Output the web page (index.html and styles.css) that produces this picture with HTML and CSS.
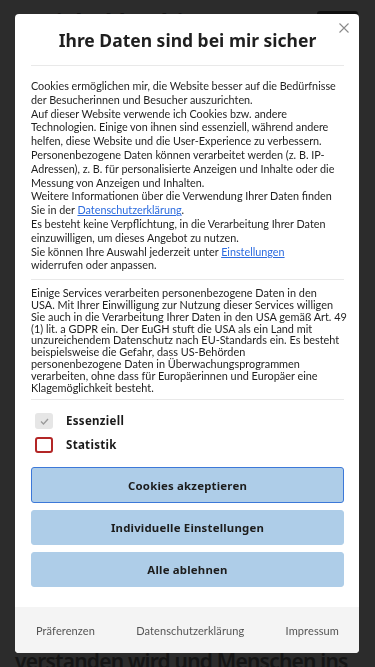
FILE: index.html
```html
<!DOCTYPE html>
<html lang="de">
    <head>
        <meta charset="utf-8">
        <meta name="viewport" content="width=device-width, initial-scale=1">
        <title>Michel Kochin</title>
        <link rel="stylesheet" href="styles.css">
    </head>
    <body>
        <div class="page">
            <div class="page-header">
                <h1 class="page-title">Michel kochin</h1>
                <span class="page-menu"></span>
            </div>
            <div class="page-body">
                <p class="page-lead">verstanden wird und Menschen ins</p>
            </div>
        </div>

        <div class="consent">
            <div class="consent-box">
                <button class="consent-close" aria-label="Schließen">
                    <svg width="10" height="10" viewBox="0 0 10 10"><path d="M0.5 0.5 L9.5 9.5 M9.5 0.5 L0.5 9.5" stroke="#8a8a8a" stroke-width="1.1" fill="none"/></svg>
                </button>
                <div class="consent-inner">
                    <h2 class="consent-title">Ihre Daten sind bei mir sicher</h2>
                    <div class="consent-text consent-text-main">
                        <p>Cookies ermöglichen mir, die Website besser auf die Bedürfnisse der Besucherinnen und Besucher auszurichten.<br>
                        Auf dieser Website verwende ich Cookies bzw. andere Technologien. Einige von ihnen sind essenziell, während andere helfen, diese Website und die User-Experience zu verbessern. Personenbezogene Daten können verarbeitet werden (z. B. IP-Adressen), z. B. für personalisierte Anzeigen und Inhalte oder die Messung von Anzeigen und Inhalten.<br>
                        Weitere Informationen über die Verwendung Ihrer Daten finden Sie in der <a href="#">Datenschutzerklärung</a>.<br>
                        Es besteht keine Verpflichtung, in die Verarbeitung Ihrer Daten einzuwilligen, um dieses Angebot zu nutzen.<br>
                        Sie können Ihre Auswahl jederzeit unter <a href="#">Einstellungen</a> widerrufen&nbsp;oder&nbsp;anpassen.</p>
                    </div>
                    <div class="consent-text consent-text-usa">
                        <p>Einige Services verarbeiten personenbezogene Daten in den<br>
                        USA. Mit Ihrer Einwilligung zur Nutzung dieser Services willigen<br>
                        Sie auch in die Verarbeitung Ihrer Daten in den USA gemäß Art. 49<br>
                        (1) lit. a GDPR ein. Der EuGH stuft die USA als ein Land mit<br>
                        unzureichendem Datenschutz nach EU-Standards ein. Es besteht<br>
                        beispielsweise die Gefahr, dass US-Behörden<br>
                        personenbezogene Daten in Überwachungsprogrammen<br>
                        verarbeiten, ohne dass für Europäerinnen und Europäer eine<br>
                        Klagemöglichkeit besteht.</p>
                    </div>
                    <div class="consent-options">
                        <label class="option">
                            <span class="option-box option-box-locked">
                                <svg width="9" height="7" viewBox="0 0 9 7"><path d="M1 3.5 L3.5 6 L8 1" stroke="#9a9a9a" stroke-width="1.3" fill="none"/></svg>
                            </span>
                            <span class="option-label">Essenziell</span>
                        </label>
                        <label class="option">
                            <span class="option-box option-box-open"></span>
                            <span class="option-label">Statistik</span>
                        </label>
                    </div>
                    <div class="consent-buttons">
                        <button class="btn btn-focus">Cookies akzeptieren</button>
                        <button class="btn">Individuelle Einstellungen</button>
                        <button class="btn">Alle ablehnen</button>
                    </div>
                </div>
                <div class="consent-footer">
                    <a href="#">Präferenzen</a>
                    <a href="#">Datenschutzerklärung</a>
                    <a href="#">Impressum</a>
                </div>
            </div>
        </div>
    </body>
</html>
```

FILE: styles.css
```css
/* Overall */

* {
    box-sizing: border-box;
}

html, body {
    padding: 0;
    margin: 0;
}

html {
    font-family: 'Noto Sans', 'Open Sans', sans-serif;
    font-size: 16px;
    background: #2c2c2c;
}

/* Page behind the overlay */

.page {
    height: 667px;
    overflow: hidden;
    display: flex;
    flex-direction: column;
    justify-content: space-between;
    color: #151515;
}

.page-header {
    display: flex;
    justify-content: space-between;
    padding: 0 17px 0 33px;
    height: 30px;
}

.page-title {
    margin: 0;
    font-size: 24px;
    font-weight: 700;
    line-height: 44px;
}

.page-menu {
    display: block;
    margin-top: 11px;
    width: 41px;
    height: 20px;
    border-radius: 3px;
    background: #0f0f0f;
}

.page-lead {
    margin: 0 0 -4px 15px;
    font-size: 21px;
    font-weight: 600;
    letter-spacing: -0.8px;
    line-height: 20px;
    white-space: nowrap;
}

/* Consent dialog */

.consent {
    position: fixed;
    top: 0;
    left: 0;
    right: 0;
    bottom: 0;
    padding: 14px 16px 14px 15px;
}

.consent-box {
    position: relative;
    height: 639px;
    background: #fff;
    border-radius: 4px;
    display: flex;
    flex-direction: column;
    overflow: hidden;
}

.consent-close {
    position: absolute;
    top: 9px;
    right: 10px;
    padding: 0;
    border: 0;
    background: none;
    width: 10px;
    height: 10px;
    line-height: 0;
}

.consent-inner {
    flex: 1;
    padding: 0 15px 0 16px;
    color: #1f1f1f;
}

.consent-title {
    margin: 0;
    padding: 14px 0 13px;
    text-align: center;
    font-size: 17.5px;
    font-weight: 700;
    line-height: 24px;
    border-bottom: 1px solid #e9e9e9;
}

.consent-text {
    border-bottom: 1px solid #e9e9e9;
}

.consent-text p {
    margin: 0;
    font-family: Lato, 'Noto Sans', sans-serif;
    font-size: 10.8px;
}

.consent-text-main {
    padding: 13px 0 7px;
}

.consent-text-main p {
    line-height: 13.8px;
}

.consent-text-usa {
    padding: 7px 0 6px;
}

.consent-text-usa p {
    margin-right: -12px;
    font-size: 10.9px;
    line-height: 11.8px;
}

.consent-text a {
    color: #2d6cdf;
}

.consent-options {
    padding: 13px 0 0 4px;
    display: flex;
    flex-direction: column;
    gap: 8px;
}

.option {
    display: flex;
    align-items: center;
    gap: 13px;
}

.option-box {
    width: 18px;
    height: 16px;
    border-radius: 3px;
    display: flex;
    align-items: center;
    justify-content: center;
}

.option-box-locked {
    background: #e6e6e6;
}

.option-box-open {
    border: 2px solid #b32626;
}

.option-label {
    font-size: 11.5px;
    font-weight: 700;
    letter-spacing: 0.3px;
    line-height: 16px;
    color: #1a1a1a;
}

.consent-buttons {
    padding-top: 14px;
    display: flex;
    flex-direction: column;
    gap: 7px;
}

.btn {
    height: 35px;
    border: 1px solid #aecde8;
    border-radius: 3px;
    background: #aecde8;
    font-family: inherit;
    font-size: 11.4px;
    font-weight: 700;
    letter-spacing: 0.2px;
    color: #1c1c1c;
}

.btn-focus {
    height: 36px;
    border-color: #3c78d8;
}

.consent-footer {
    height: 46px;
    background: #f4f4f4;
    display: flex;
    align-items: center;
    justify-content: space-between;
    padding: 0 20px 0 21px;
}

.consent-footer a {
    color: #555;
    font-family: Lato, 'Noto Sans', sans-serif;
    font-size: 11px;
    letter-spacing: 0.1px;
    text-decoration: none;
}
```
